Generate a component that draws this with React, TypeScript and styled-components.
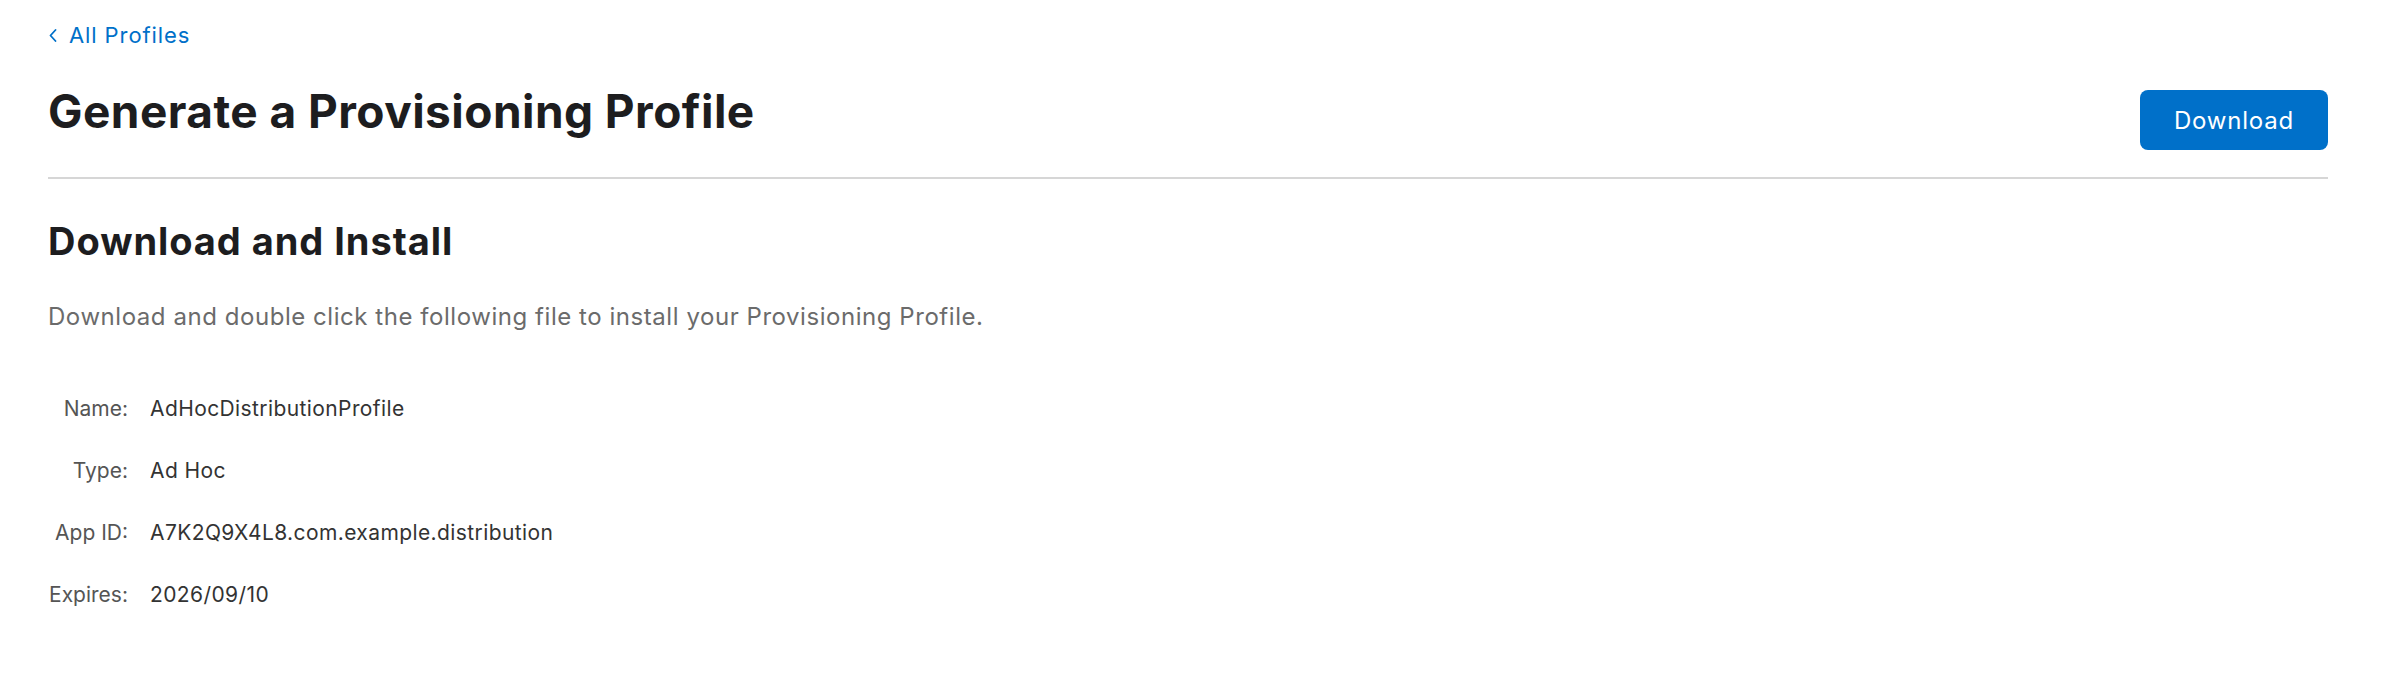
import styled, { createGlobalStyle } from 'styled-components';

const GlobalStyle = createGlobalStyle`
    html, body {
        margin: 0;
        padding: 0;
        background: #fff;
    }
    body {
        font-family: Inter, "Noto Sans", "Liberation Sans", sans-serif;
        -webkit-font-smoothing: antialiased;
    }
`

const Page = styled.main`
    padding: 22px 70px 60px 48px;
`

const BackLink = styled.a`
    display: inline-flex;
    align-items: center;
    gap: 12px;
    color: #0070c9;
    font-size: 22px;
    line-height: 26px;
    letter-spacing: 0.9px;
    text-decoration: none;
    cursor: pointer;
    padding-left: 1px;
`

const Header = styled.header`
    display: flex;
    justify-content: space-between;
    align-items: flex-start;
    padding: 37px 0 27px;
    border-bottom: 2px solid #d6d6d6;
`

const Title = styled.h1`
    margin: 0;
    font-size: 46px;
    line-height: 52px;
    font-weight: 700;
    color: #1d1d1f;
    letter-spacing: 0.45px;
`

const PrimaryButton = styled.button`
    margin-top: 5px;
    width: 188px;
    height: 60px;
    border: none;
    border-radius: 8px;
    background: #0070c9;
    color: #fff;
    font-family: inherit;
    font-size: 24px;
    letter-spacing: 0.8px;
    cursor: pointer;
`

const SectionTitle = styled.h2`
    margin: 40px 0 0;
    font-size: 38px;
    line-height: 44px;
    font-weight: 700;
    color: #1d1d1f;
    letter-spacing: 0.95px;
`

const Description = styled.p`
    margin: 40px 0 0;
    font-size: 24px;
    line-height: 28px;
    letter-spacing: 0.55px;
    color: #6b6b6b;
`

const Details = styled.dl`
    margin: 65px 0 0;
    display: grid;
    grid-template-columns: 80px auto;
    column-gap: 22px;
    row-gap: 36px;
    font-size: 21px;
    line-height: 26px;
`

const Label = styled.dt`
    color: #555;
    text-align: right;
`

const Value = styled.dd`
    margin: 0;
    color: #333;
    letter-spacing: 0.4px;
`

const rows = [
    { label: 'Name:', value: 'AdHocDistributionProfile' },
    { label: 'Type:', value: 'Ad Hoc' },
    { label: 'App ID:', value: 'A7K2Q9X4L8.com.example.distribution' },
    { label: 'Expires:', value: '2026/09/10' },
];

const App = () => {
    return (
        <>
            <GlobalStyle />
            <Page>
                <BackLink>
                    <svg width="8" height="13" viewBox="0 0 8 13" fill="none">
                        <polyline points="6.5,1 1.5,6.5 6.5,12" stroke="#0070c9" strokeWidth="1.8" strokeLinecap="round" strokeLinejoin="round" />
                    </svg>
                    All Profiles
                </BackLink>
                <Header>
                    <Title>Generate a Provisioning Profile</Title>
                    <PrimaryButton>Download</PrimaryButton>
                </Header>
                <SectionTitle>Download and Install</SectionTitle>
                <Description>Download and double click the following file to install your Provisioning Profile.</Description>
                <Details>
                    {rows.map(row => (
                        <>
                            <Label key={row.label}>{row.label}</Label>
                            <Value>{row.value}</Value>
                        </>
                    ))}
                </Details>
            </Page>
        </>
    );
};

export default App;
